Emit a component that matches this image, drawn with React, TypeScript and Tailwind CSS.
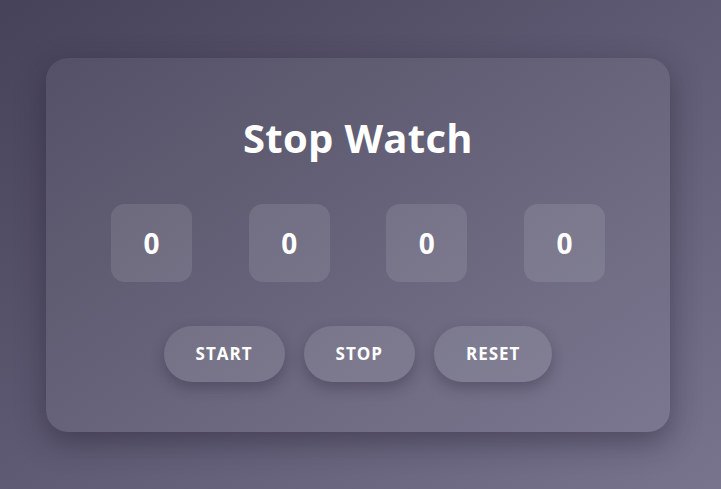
export default function App() {
  const digits = ["0", "0", "0", "0"];
  return (
    <div
      className="w-[721px] h-[489px] flex items-center bg-gradient-to-br from-[#464259] to-[#78748e]"
      style={{ fontFamily: '"Open Sans", "Noto Sans", sans-serif' }}
    >
      <div className="ml-[46px] w-[624px] h-[374px] rounded-[22px] bg-white/[0.06] shadow-[0_10px_30px_rgba(30,27,45,0.45)] flex flex-col items-center">
        <h1 className="mt-[52px] text-[40px] leading-[56px] font-bold text-white tracking-[0.3px]">Stop Watch</h1>
        <div className="mt-[38px] w-full px-[65px] flex justify-between">
          {digits.map((d, i) => (
            <div
              key={i}
              className="w-[81px] h-[78px] rounded-[14px] bg-white/[0.1] flex items-center justify-center text-[28px] font-bold text-white"
            >
              {d}
            </div>
          ))}
        </div>
        <div className="mt-[44px] flex gap-[19px]">
          {["START", "STOP", "RESET"].map((b) => (
            <button
              key={b}
              className="h-[56px] px-[32px] rounded-full bg-white/[0.1] text-white text-[17px] font-bold tracking-[1px] shadow-[0_6px_14px_rgba(30,27,45,0.3)]"
            >
              {b}
            </button>
          ))}
        </div>
      </div>
    </div>
  );
}
